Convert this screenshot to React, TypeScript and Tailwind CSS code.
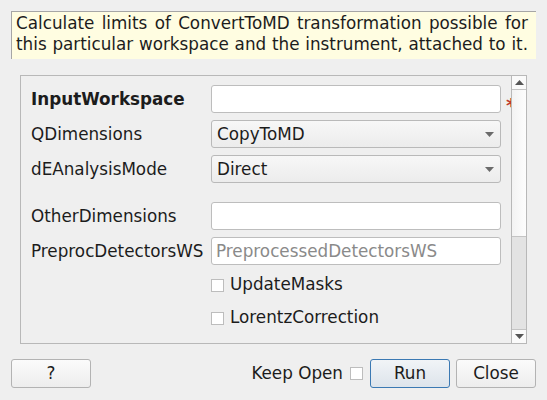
import React from "react";

const font = { fontFamily: '"DejaVu Sans", "Liberation Sans", sans-serif' };

function Arrow() {
  return (
    <svg width="9" height="5" viewBox="0 0 9 5" className="shrink-0">
      <path d="M0 0 L9 0 L4.5 5 Z" fill="#6b6b6b" />
    </svg>
  );
}

function Row({ label, bold, children }: { label: string; bold?: boolean; children: React.ReactNode }) {
  return (
    <div className="flex items-center h-[28px]">
      <div className={"w-[180px] shrink-0 whitespace-nowrap pt-[1px] " + (bold ? "font-bold" : "")}>{label}</div>
      {children}
    </div>
  );
}

function TextBox({ placeholder }: { placeholder?: string }) {
  return (
    <div className="w-[290px] shrink-0 h-[28px] rounded-[3px] border border-[#bdbdbd] bg-white flex items-center px-[4px] pt-[1px] text-[#8a8a8a] whitespace-nowrap">
      {placeholder}
    </div>
  );
}

function Combo({ value }: { value: string }) {
  return (
    <div className="w-[290px] shrink-0 h-[28px] rounded-[3px] border border-[#b9b9b9] bg-gradient-to-b from-[#f7f7f7] to-[#ececec] flex items-center justify-between pl-[5px] pr-[6px] pt-[1px]">
      <span>{value}</span>
      <Arrow />
    </div>
  );
}

function Check({ label }: { label: string }) {
  return (
    <div className="flex items-center h-[26px] pl-[180px]">
      <div className="w-[13px] h-[13px] border border-[#bdbdbd] bg-white mr-[6px]" />
      <span>{label}</span>
    </div>
  );
}

export default function App() {
  return (
    <div className="w-[547px] h-[400px] bg-[#efefef] text-[#1c1c1c] text-[16.8px] flex flex-col overflow-hidden" style={font}>
      <div className="mx-[11px] mt-[11px] h-[48px] bg-[#fffde1] border-t border-l border-[#a6a6a6] pl-[4px] pr-[8px] pt-[1px] leading-[21px]">
        <div className="text-justify [text-align-last:justify] whitespace-nowrap">Calculate limits of ConvertToMD transformation possible for</div>
        <div className="text-justify [text-align-last:justify] whitespace-nowrap">this particular workspace and the instrument, attached to it.</div>
      </div>

      <div className="ml-[20px] mt-[16px] w-[507px] h-[269px] border border-[#b8b8b8] flex">
        <div className="flex-1 overflow-hidden pl-[10px] pt-[9px] flex flex-col">
          <div className="flex flex-col gap-[7px]">
            <Row label="InputWorkspace" bold>
              <TextBox />
              <span className="text-[#c0392b] font-bold text-[20px] ml-[5px] leading-none relative top-[6px]">*</span>
            </Row>
            <Row label="QDimensions">
              <Combo value="CopyToMD" />
            </Row>
            <Row label="dEAnalysisMode">
              <Combo value="Direct" />
            </Row>
          </div>
          <div className="flex flex-col gap-[7px] mt-[19px]">
            <Row label="OtherDimensions">
              <TextBox />
            </Row>
            <Row label="PreprocDetectorsWS">
              <TextBox placeholder="PreprocessedDetectorsWS" />
            </Row>
            <Check label="UpdateMasks" />
            <Check label="LorentzCorrection" />
            <div className="pt-[2px]">
              <Check label="IgnoreZeroSignals" />
            </div>
          </div>
        </div>
        <div className="w-[15px] shrink-0 border-l border-[#b8b8b8] flex flex-col">
          <div className="h-[14px] border-b border-[#c4c4c4] bg-[#fafafa] flex items-center justify-center">
            <svg width="9" height="5" viewBox="0 0 9 5">
              <path d="M0 5 L9 5 L4.5 0 Z" fill="#555" />
            </svg>
          </div>
          <div className="h-[147px] bg-gradient-to-r from-[#f3f3f3] to-[#fdfdfd] border-b border-[#c4c4c4]" />
          <div className="flex-1 bg-[#e3e3e3]" />
          <div className="h-[14px] border-t border-[#c4c4c4] bg-[#fafafa] flex items-center justify-center">
            <svg width="9" height="5" viewBox="0 0 9 5">
              <path d="M0 0 L9 0 L4.5 5 Z" fill="#555" />
            </svg>
          </div>
        </div>
      </div>

      <div className="mt-[15px] mx-[11px] flex items-center h-[29px]">
        <button className="w-[80px] h-[29px] rounded-[3px] border border-[#b3b3b3] bg-gradient-to-b from-[#fbfbfb] to-[#ededed]">?</button>
        <div className="flex-1" />
        <span>Keep Open</span>
        <div className="w-[13px] h-[13px] border border-[#bdbdbd] bg-white ml-[7px] mr-[7px]" />
        <button className="w-[80px] h-[29px] rounded-[3px] border border-[#3b79b3] bg-gradient-to-b from-[#f1f4f7] to-[#dde4eb]">Run</button>
        <button className="w-[80px] h-[29px] ml-[6px] rounded-[3px] border border-[#b3b3b3] bg-gradient-to-b from-[#fbfbfb] to-[#ededed]">Close</button>
      </div>
    </div>
  );
}
